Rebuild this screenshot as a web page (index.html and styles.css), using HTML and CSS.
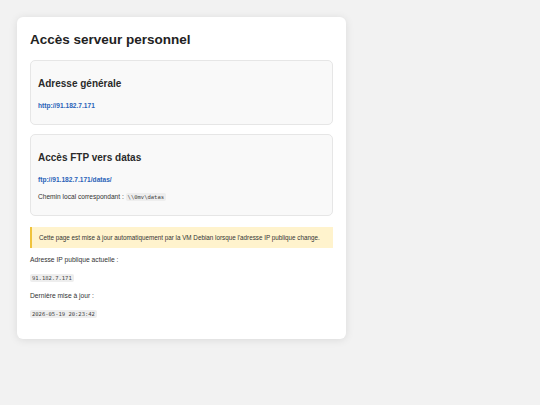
FILE: index.html
```html
<!DOCTYPE html>
<html lang="fr">
<head>
    <meta charset="UTF-8">
    <meta name="viewport" content="width=device-width, initial-scale=1.0">
    <title>Accès serveur personnel</title>
    <link rel="stylesheet" href="styles.css">
</head>
<body>
    <div class="card">
        <h1>Accès serveur personnel</h1>

        <div class="section">
            <h2>Adresse générale</h2>
            <p><a href="#">http://91.182.7.171</a></p>
        </div>

        <div class="section">
            <h2>Accès FTP vers datas</h2>
            <p><a href="#">ftp://91.182.7.171/datas/</a></p>
            <p>Chemin local correspondant : <code>\\0mv\datas</code></p>
        </div>

        <div class="notice">
            Cette page est mise à jour automatiquement par la VM Debian lorsque l'adresse IP publique change.
        </div>

        <p class="info">Adresse IP publique actuelle :</p>
        <p class="info"><code>91.182.7.171</code></p>
        <p class="info">Dernière mise à jour :</p>
        <p class="info last"><code>2026-05-19 20:23:42</code></p>
    </div>
</body>
</html>
```

FILE: styles.css
```css
body {
    font-family: "Liberation Sans", Arial, sans-serif;
    margin: 0;
    padding: 17px;
    background-color: #f2f2f2;
    color: #333;
}
.card {
    width: 329px;
    box-sizing: border-box;
    padding: 14px 13px 13px;
    background-color: #fff;
    border-radius: 6px;
    box-shadow: 0 1px 8px rgba(0, 0, 0, 0.1);
}
h1 {
    font-size: 13.5px;
    line-height: 18px;
    margin: 0 0 11px;
    color: #222;
}
.section {
    background-color: #f9f9f9;
    border: 1px solid #e6e6e6;
    border-radius: 5px;
    padding: 7px 7px 5px;
    margin-bottom: 9px;
}
.section h2 {
    font-size: 10px;
    line-height: 14px;
    margin: 9px 0 11px;
    color: #2a2a2a;
}
.section p {
    font-size: 6.6px;
    line-height: 8px;
    margin: 0 0 9px;
}
.section a {
    color: #2a62b8;
    font-weight: bold;
    text-decoration: none;
}
code {
    font-family: "DejaVu Sans Mono", "Liberation Mono", monospace;
    font-size: 5.5px;
    line-height: 1;
    color: #444;
    background-color: #eee;
    padding: 1px 2px;
    border-radius: 2px;
}
.notice {
    margin-top: 11px;
    background-color: #fff3cd;
    border-left: 2px solid #f0c33c;
    padding: 6px 7px;
    font-size: 6.3px;
    line-height: 9px;
    color: #333;
}
.info {
    font-size: 6.7px;
    line-height: 8px;
    margin: 8px 0 10px;
}
.info.last {
    margin-bottom: 8px;
}
```
